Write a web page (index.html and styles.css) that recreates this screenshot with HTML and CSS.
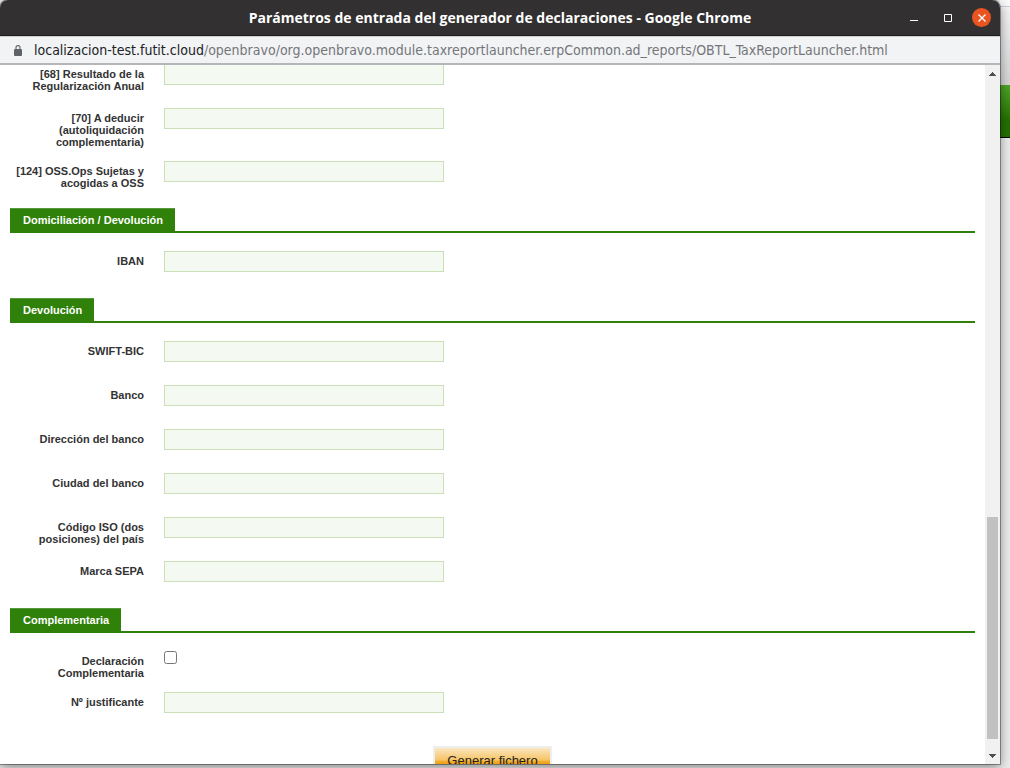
FILE: index.html
```html
<!DOCTYPE html>
<html lang="es">
<head>
<meta charset="utf-8">
<title>Parámetros de entrada del generador de declaraciones</title>
<link rel="stylesheet" href="styles.css">
</head>
<body>
<div class="desktop">
  <div class="window">
    <header class="titlebar">
      <h1 class="title">Parámetros de entrada del generador de declaraciones - Google Chrome</h1>
      <div class="controls">
        <button class="control" type="button" aria-label="Minimizar"><svg width="8" height="10" viewBox="0 0 8 10"><path d="M0 7.500h8" stroke="#fff" fill="none"/></svg></button>
        <button class="control" type="button" aria-label="Maximizar"><svg width="8" height="8" viewBox="0 0 8 8"><path d="M.5.5h7v7h-7z" stroke="#fff" fill="none"/></svg></button>
        <button class="control close" type="button" aria-label="Cerrar"><svg width="8" height="8" viewBox="0 0 8 8"><path d="M.5.5l7 7M7.500.5l-7 7" stroke="#fff" stroke-width="1.400" fill="none"/></svg></button>
      </div>
    </header>
    <div class="urlbar">
      <svg class="lock" width="8" height="11" viewBox="0 0 8 11"><rect y="4" width="8" height="7" rx="1" fill="#5f6368"/><path d="M2 5V2.600a2 2 0 0 1 4 0V5" fill="none" stroke="#5f6368" stroke-width="1.100"/></svg>
      <span class="url"><span class="host">localizacion-test.futit.cloud</span>/openbravo/org.openbravo.module.taxreportlauncher.erpCommon.ad_reports/OBTL_TaxReportLauncher.html</span>
    </div>
    <div class="viewport">
      <form class="page">
        <div class="row"><label class="label" for="r68">[68] Resultado de la Regularización Anual</label><input class="field" id="r68" type="text"></div>
        <div class="row"><label class="label" for="r70">[70] A deducir (autoliquidación complementaria)</label><input class="field" id="r70" type="text"></div>
        <div class="row"><label class="label" for="r124">[124] OSS.Ops Sujetas y acogidas a OSS</label><input class="field" id="r124" type="text"></div>
        <div class="section"><h2 class="tab">Domiciliación / Devolución</h2></div>
        <div class="row"><label class="label" for="iban">IBAN</label><input class="field" id="iban" type="text"></div>
        <div class="section"><h2 class="tab">Devolución</h2></div>
        <div class="row"><label class="label" for="swift">SWIFT-BIC</label><input class="field" id="swift" type="text"></div>
        <div class="row"><label class="label" for="banco">Banco</label><input class="field" id="banco" type="text"></div>
        <div class="row"><label class="label" for="dir">Dirección del banco</label><input class="field" id="dir" type="text"></div>
        <div class="row"><label class="label" for="ciudad">Ciudad del banco</label><input class="field" id="ciudad" type="text"></div>
        <div class="row"><label class="label" for="iso">Código ISO (dos posiciones) del país</label><input class="field" id="iso" type="text"></div>
        <div class="row"><label class="label" for="sepa">Marca SEPA</label><input class="field" id="sepa" type="text"></div>
        <div class="section"><h2 class="tab">Complementaria</h2></div>
        <div class="row"><label class="label" for="comp">Declaración Complementaria</label><input class="check" id="comp" type="checkbox"></div>
        <div class="row"><label class="label" for="just">Nº justificante</label><input class="field" id="just" type="text"></div>
        <div class="actions"><button class="submit" type="button">Generar fichero</button></div>
      </form>
      <div class="scrollbar">
        <button class="arrow" type="button" aria-label="Subir"><svg width="7" height="4" viewBox="0 0 7 4" shape-rendering="crispEdges"><path d="M3 0h1v1h1v1h1v1h1v1H0V3h1V2h1V1h1z" fill="#505050"/></svg></button>
        <div class="track"><div class="before"></div><div class="thumb"></div><div class="after"></div></div>
        <button class="arrow" type="button" aria-label="Bajar"><svg width="7" height="4" viewBox="0 0 7 4" shape-rendering="crispEdges"><path d="M0 0h7v1H6v1H5v1H4v1H3V3H2V2H1V1H0z" fill="#505050"/></svg></button>
      </div>
    </div>
  </div>
  <div class="behind"><div class="strip-top"></div><div class="strip-gray"></div><div class="strip-green"></div></div>
</div>
</body>
</html>
```
FILE: styles.css
```css
* { box-sizing: border-box; }
body { margin: 0; background: #ececec; font-family: "Liberation Sans", Arial, sans-serif; }
button { border: 0; padding: 0; background: none; }
.desktop { display: flex; height: 100vh; padding-bottom: 4px; overflow: hidden; }
.window {
  flex: 1; min-width: 0; display: flex; flex-direction: column; z-index: 1;
  border-radius: 8px 8px 0 0;
  box-shadow: 0 0 0 1px rgba(0,0,0,.35), 0 3px 12px rgba(0,0,0,.45);
}
.titlebar {
  display: grid; grid-template-columns: 1fr auto 1fr; align-items: center;
  height: 36px; background: #333031; border-bottom: 1px solid #1d1b1c;
  border-radius: 8px 8px 0 0; color: #fff;
}
.title { grid-column: 2; margin: 0; font: bold 14px/20px "Open Sans", "Noto Sans", sans-serif; white-space: nowrap; }
.controls { display: flex; justify-content: flex-end; align-items: center; gap: 15px; padding-right: 9px; }
.control { width: 19px; height: 19px; display: flex; align-items: center; justify-content: center; }
.close { background: #e95420; border-radius: 50%; }
.urlbar {
  display: flex; align-items: center; gap: 12px; height: 29px; padding: 0 14px;
  background: #f1f3f4; border-top: 1px solid #cfcfcf; border-bottom: 2px solid #b5b6b9;
}
.lock { flex: none; }
.url { font: 14px/20px "DejaVu Sans Condensed", "Noto Sans", sans-serif; color: #75767a; white-space: nowrap; }
.host { color: #202124; }
.viewport { flex: 1; min-height: 0; display: flex; overflow: hidden; background: #fff; }
.page { flex: 1; margin: -1px 10px 0; }
.row { display: flex; align-items: flex-start; gap: 20px; }
.label {
  width: 134px; padding: 4px 0 13px; text-align: right;
  font-size: 11px; line-height: 12px; font-weight: bold; color: #333;
}
.field { width: 280px; height: 21px; margin: 0 0 23px; border: 1px solid #cbe0b9; background: #f4f9f2; }
.check { width: 13px; height: 13px; margin: 0; }
.section { display: flex; margin: 3px 0 18px; border-bottom: 2px solid #2f8109; }
.tab {
  margin: 0; padding: 0 12px 0 13px; background: #2f8109; border-top: 1px solid #56993a;
  color: #fff; font-size: 11px; line-height: 22px; font-weight: bold;
}
.actions { display: flex; justify-content: center; margin-top: 10px; }
.submit {
  height: 30px; padding: 0 12px; border: 2px solid #eee;
  background: linear-gradient(#fbe6c2, #f6c567 45%, #f2a41a 55%, #f0a010);
  font: 13px/26px "Liberation Sans", Arial, sans-serif; color: #222;
}
.scrollbar { width: 15px; display: flex; flex-direction: column; background: #f1f1f1; }
.arrow { height: 17px; display: flex; align-items: center; justify-content: center; }
.track { flex: 1; display: flex; flex-direction: column; padding: 0 2px; }
.before { flex: 435; }
.thumb { flex: 222; background: #c1c1c1; }
.after { flex: 8; }
.behind { width: 10px; }
.strip-top { height: 7px; background: #fafafa; border-bottom: 1px solid #ccd; }
.strip-gray { height: 78px; background: linear-gradient(#f5f5f5, #d4d4d4); }
.strip-green { height: 53px; background: linear-gradient(#4fa526, #237002 70%); border-bottom: 1px solid #000; }
```
